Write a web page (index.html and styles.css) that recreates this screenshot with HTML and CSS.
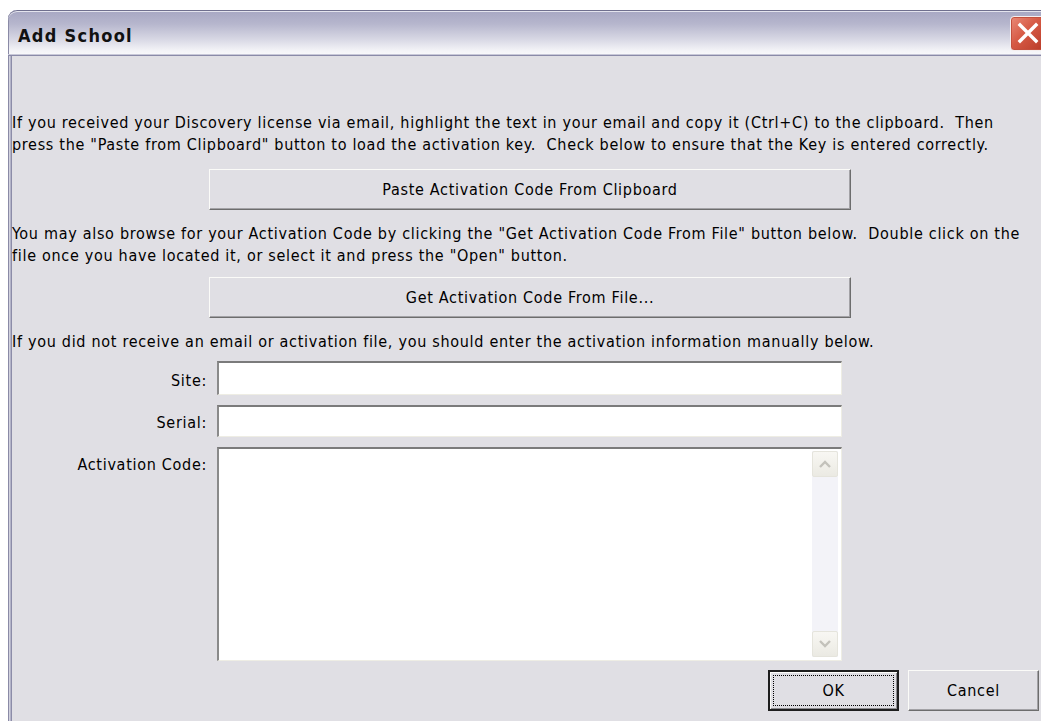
FILE: index.html
```html
<!DOCTYPE html>
<html lang="en">
<head>
<meta charset="utf-8">
<title>Add School</title>
<link rel="stylesheet" href="styles.css">
</head>
<body>
<div class="window">
  <div class="titlebar">
    <span class="title">Add School</span>
    <button class="close" aria-label="Close">
      <svg width="24" height="24" viewBox="0 0 24 24" aria-hidden="true">
        <path d="M4 4 L20 20 M20 4 L4 20" stroke="#fff" stroke-width="3.4" stroke-linecap="square" fill="none"/>
      </svg>
    </button>
  </div>
  <div class="client">
    <p class="note note-paste">If you received your Discovery license via email, highlight the text in your email and copy it (Ctrl+C) to the clipboard.  Then
press the "Paste from Clipboard" button to load the activation key.  Check below to ensure that the Key is entered correctly.</p>
    <button class="btn wide btn-paste">Paste Activation Code From Clipboard</button>
    <p class="note note-file">You may also browse for your Activation Code by clicking the "Get Activation Code From File" button below.  Double click on the
file once you have located it, or select it and press the "Open" button.</p>
    <button class="btn wide btn-file">Get Activation Code From File...</button>
    <p class="note note-manual">If you did not receive an email or activation file, you should enter the activation information manually below.</p>
    <div class="form">
      <label class="lbl lbl-first" for="site">Site:</label>
      <input class="field" id="site" type="text">
      <label class="lbl" for="serial">Serial:</label>
      <input class="field" id="serial" type="text">
      <label class="lbl" for="code">Activation Code:</label>
      <div class="memo" id="code">
        <div class="memo-text"></div>
        <div class="scrollbar">
          <span class="sb-btn">
            <svg width="14" height="10" viewBox="0 0 14 10" aria-hidden="true"><path d="M2 8 L7 3 L12 8" stroke="#c3c2bb" stroke-width="2.4" fill="none"/></svg>
          </span>
          <span class="sb-btn">
            <svg width="14" height="10" viewBox="0 0 14 10" aria-hidden="true"><path d="M2 2 L7 7 L12 2" stroke="#c3c2bb" stroke-width="2.4" fill="none"/></svg>
          </span>
        </div>
      </div>
    </div>
    <div class="actions">
      <button class="btn action default">OK</button>
      <button class="btn action">Cancel</button>
    </div>
  </div>
</div>
</body>
</html>
```

FILE: styles.css
```css
html, body {
  margin: 0;
  padding: 0;
  background: #ffffff;
  overflow: hidden;
  height: 721px;
}

body {
  font-family: "DejaVu Sans Condensed", "DejaVu Sans", sans-serif;
  font-size: 16px;
  letter-spacing: 0.7px;
  color: #000;
}

/* dialog frame */
.window {
  margin: 10px 0 0 8px;
  width: 1040px;
  height: 711px;
  border-top-left-radius: 9px;
  overflow: hidden;
  background: #e0dfe4;
  padding-left: 4px;
  box-sizing: border-box;
  box-shadow:
    inset 1px 0 #8a8aa6,
    inset 2px 0 #d2d2de,
    inset 3px 0 #b4b4c8,
    inset 4px 0 #8c8ca8;
  display: flex;
  flex-direction: column;
}

.titlebar {
  height: 46px;
  margin-left: -4px;
  padding-left: 10px;
  display: flex;
  align-items: center;
  justify-content: space-between;
  background: linear-gradient(#a6a6c2 0%, #b6b6cd 30%, #d6d6e3 62%, #f3f3f7 88%, #fbfbfc 100%);
  box-shadow:
    inset 0 1px #6f6f8e,
    inset 0 2px #e4e4ee,
    inset 0 -1px #8a8aa8,
    inset 0 -2px #c8c8d8,
    inset 1px 0 #8a8aa6;
  border-top-left-radius: 9px;
  flex: none;
}

.title {
  font-family: "DejaVu Sans Condensed", "DejaVu Sans", sans-serif;
  font-weight: bold;
  font-size: 18px;
  letter-spacing: 1.3px;
  color: #111;
  margin-top: 5px;
}

.close {
  width: 35px;
  height: 35px;
  margin-right: 3px;
  padding: 0;
  border: 1px solid #f4eeee;
  border-radius: 4px;
  background: linear-gradient(135deg, #ea8a78 0%, #d65a45 45%, #b83a28 100%);
  box-shadow: inset 0 0 0 1px #c4503e;
  display: flex;
  align-items: center;
  justify-content: center;
}

.client {
  flex: 1;
  padding-top: 56px;
}

.note {
  margin: 0;
  white-space: pre;
  line-height: 22px;
}

.btn {
  font-family: inherit;
  font-size: 16px;
  letter-spacing: 0.7px;
  color: #000;
  background: #e0dfe4;
  border: 1px solid;
  border-color: #fbfbf8 #6d6d6d #6d6d6d #fbfbf8;
  box-shadow: inset -1px -1px #a3a2a6;
  padding: 0;
  display: block;
}

.wide {
  width: 642px;
  height: 41px;
  margin-left: 197px;
}

.btn-paste { margin-top: 13px; }
.note-file { margin-top: 13px; }
.btn-file { margin-top: 10px; }
.note-manual { margin-top: 13px; }

.form {
  margin-top: 8px;
  display: grid;
  grid-template-columns: 195px 625px;
  grid-template-rows: 34px 32px 214px;
  column-gap: 10px;
  row-gap: 10px;
}

.lbl {
  text-align: right;
  align-self: start;
  line-height: 20px;
  padding-top: 8px;
}

.lbl-first {
  padding-top: 10px;
}

.field, .memo {
  box-sizing: border-box;
  background: #fff;
  border-style: solid;
  border-width: 2px 1px 1px 2px;
  border-color: #7b7b7b #eeede4 #eeede4 #8a8a8a;
  margin: 0;
  padding: 0;
  font: inherit;
}

.field {
  width: 625px;
  height: 100%;
}

.memo {
  display: flex;
}

.memo-text {
  flex: 1;
}

.scrollbar {
  width: 26px;
  margin: 2px 3px 3px 0;
  background: #f3f3f8;
  display: flex;
  flex-direction: column;
  justify-content: space-between;
}

.sb-btn {
  height: 26px;
  box-sizing: border-box;
  border: 1px solid #e5e4dc;
  border-radius: 2px;
  background: linear-gradient(#f8f7f3, #ebeae3);
  display: flex;
  align-items: center;
  justify-content: center;
}

.actions {
  margin: 9px 0 0 756px;
  display: flex;
  gap: 9px;
}

.action {
  width: 131px;
  height: 41px;
  position: relative;
}

.default {
  border: 2px solid #1e1e1e;
  box-shadow: inset 1px 1px #fbfbf8, inset -1px -1px #8d8c90;
}

/* keyboard focus rectangle on the default button */
.default::after {
  content: "";
  position: absolute;
  inset: 3px;
  border: 1px dotted #000;
}
```
